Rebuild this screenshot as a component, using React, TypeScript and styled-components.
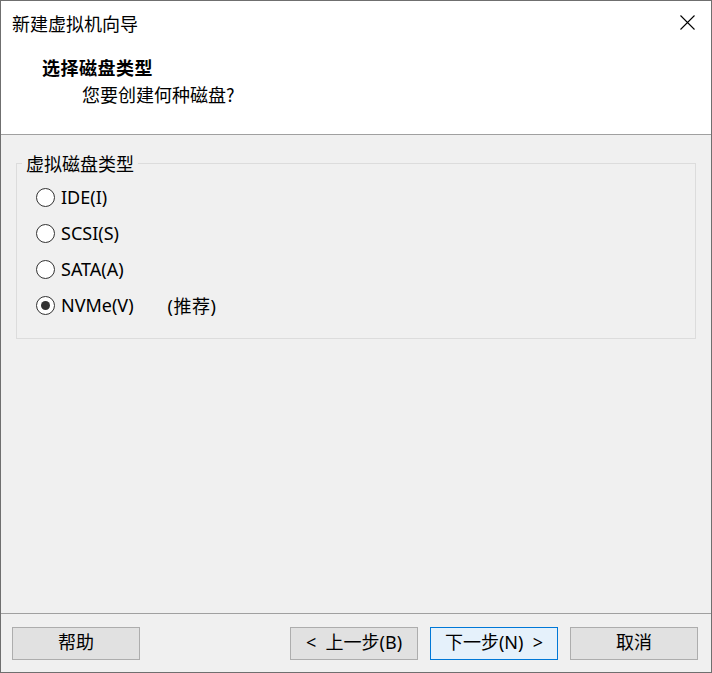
import React, { useState } from "react";
import styled, { createGlobalStyle } from "styled-components";

const Global = createGlobalStyle`
  html, body { margin: 0; padding: 0; background: #ffffff; }
  * { box-sizing: border-box; }
  body { font-family: "Noto Sans", "Noto Sans CJK SC", sans-serif; color: #000; }
`;

const Window = styled.div`
  width: 712px;
  height: 673px;
  border: 1px solid #6f6f6f;
  background: #f0f0f0;
  display: flex;
  flex-direction: column;
`;

const Header = styled.div`
  height: 134px;
  flex: none;
  background: #ffffff;
  border-bottom: 1px solid #a0a0a0;
  display: flex;
  flex-direction: column;
`;

const TitleBar = styled.div`
  height: 43px;
  display: flex;
  align-items: center;
  justify-content: space-between;
  padding: 0 16px 0 11px;
  font-family: "Noto Sans CJK SC", sans-serif;
  font-size: 18px;
  line-height: 20px;
`;

const CloseButton = styled.button`
  width: 16px;
  height: 16px;
  padding: 0;
  border: none;
  background: transparent;
  display: flex;
  align-items: center;
  justify-content: center;
`;

const Heading = styled.div`
  margin-top: 12px;
  padding-left: 41px;
  font-family: "Noto Sans CJK SC", sans-serif;
  font-weight: 700;
  font-size: 18px;
  letter-spacing: 0.5px;
  line-height: 22px;
`;

const SubHeading = styled.div`
  margin-top: 5px;
  padding-left: 81px;
  font-family: "Noto Sans CJK SC", sans-serif;
  font-size: 18px;
  line-height: 22px;
`;

const Body = styled.div`
  flex: 1;
  padding: 18px 15px 0 15px;
`;

const Group = styled.fieldset`
  margin: 0;
  padding: 0;
  height: 186px;
  border: 1px solid #dcdcdc;
  border-radius: 0;
`;

const Legend = styled.legend`
  margin-left: 5px;
  padding: 0 4px;
  font-family: "Noto Sans CJK SC", sans-serif;
  font-size: 18px;
  line-height: 20px;
`;

const RadioList = styled.div`
  display: flex;
  flex-direction: column;
  padding: 6px 0 0 19px;
`;

const RadioRow = styled.label`
  height: 36px;
  display: flex;
  align-items: center;
  font-family: "Noto Sans", "Noto Sans CJK SC", sans-serif;
  font-size: 18px;
  cursor: default;
`;

const RadioInput = styled.input.attrs({ type: "radio" })`
  appearance: none;
  margin: 0 6px 0 0;
  width: 19px;
  height: 19px;
  border-radius: 50%;
  border: 1px solid #333333;
  background: #ffffff;
  display: grid;
  place-items: center;
  &::after {
    content: "";
    width: 9px;
    height: 9px;
    border-radius: 50%;
    background: #333333;
    transform: scale(0);
  }
  &:checked::after {
    transform: scale(1);
  }
`;

const Hint = styled.span`
  margin-left: 34px;
  font-family: "Noto Sans", "Noto Sans CJK SC", sans-serif;
  letter-spacing: 0.5px;
`;

const Footer = styled.div`
  height: 59px;
  flex: none;
  border-top: 1px solid #a0a0a0;
  padding: 13px 13px 0 11px;
  display: flex;
  align-items: flex-start;
  gap: 12px;
`;

const Spacer = styled.div`
  flex: 1;
`;

const Button = styled.button<{ $primary?: boolean }>`
  width: 128px;
  height: 33px;
  padding: 0 0 3px 0;
  border: 1px solid ${(p) => (p.$primary ? "#0078d7" : "#adadad")};
  background: ${(p) => (p.$primary ? "#e5f1fb" : "#e1e1e1")};
  font-family: "Noto Sans", "Noto Sans CJK SC", sans-serif;
  font-size: 18px;
  line-height: 22px;
  color: #000;
  display: flex;
  align-items: center;
  justify-content: center;
  white-space: pre;
`;

const options = [
  { id: "ide", label: "IDE(I)" },
  { id: "scsi", label: "SCSI(S)" },
  { id: "sata", label: "SATA(A)" },
  { id: "nvme", label: "NVMe(V)", hint: "(推荐)" },
];

export default function App() {
  const [value, setValue] = useState("nvme");
  return (
    <>
      <Global />
      <Window>
        <Header>
          <TitleBar>
            <span>新建虚拟机向导</span>
            <CloseButton aria-label="关闭">
              <svg width="15" height="15" viewBox="0 0 15 15">
                <path d="M0.5 0.5 L14.5 14.5 M14.5 0.5 L0.5 14.5" stroke="#000" strokeWidth="1.1" fill="none" />
              </svg>
            </CloseButton>
          </TitleBar>
          <Heading>选择磁盘类型</Heading>
          <SubHeading>您要创建何种磁盘?</SubHeading>
        </Header>
        <Body>
          <Group>
            <Legend>虚拟磁盘类型</Legend>
            <RadioList>
              {options.map((o) => (
                <RadioRow key={o.id}>
                  <RadioInput
                    name="disk"
                    checked={value === o.id}
                    onChange={() => setValue(o.id)}
                  />
                  <span>{o.label}</span>
                  {o.hint && <Hint>{o.hint}</Hint>}
                </RadioRow>
              ))}
            </RadioList>
          </Group>
        </Body>
        <Footer>
          <Button>帮助</Button>
          <Spacer />
          <Button>{"<  上一步(B)"}</Button>
          <Button $primary>{"下一步(N)  >"}</Button>
          <Button>取消</Button>
        </Footer>
      </Window>
    </>
  );
}
